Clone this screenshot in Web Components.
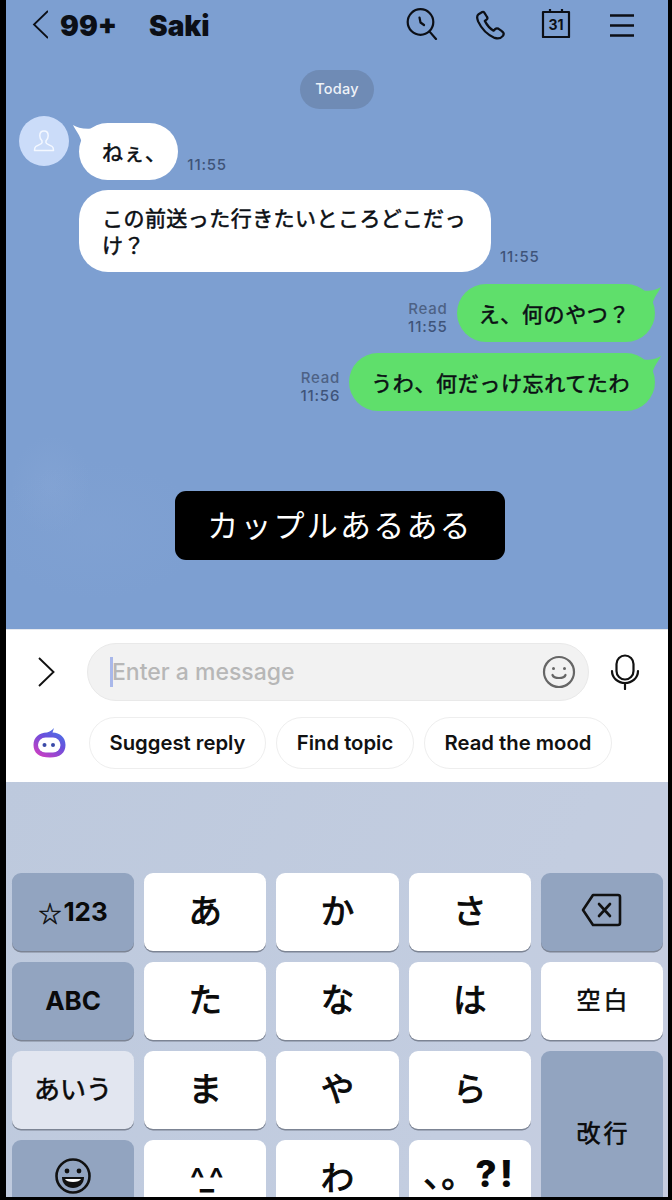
<!DOCTYPE html>
<html lang="ja">
<head>
<meta charset="utf-8">
<title>Saki</title>
<style>
    html, body { margin: 0; height: 1200px; background: #000; overflow: hidden; }
    body { font-family: Inter, "Noto Sans CJK JP", sans-serif; }
</style>
</head>
<body>
<phone-screen>
    <chat-view>
        <chat-header slot="top" count="99+" name="Saki"></chat-header>
        <date-pill>Today</date-pill>
        <chat-row side="in" avatar gap="7" time="11:55"><chat-bubble side="in" tail short>ねぇ、</chat-bubble></chat-row>
        <chat-row side="in" gap="10" time="11:55"><chat-bubble side="in" wide>この前送った行きたいところどこだっ<br>け？</chat-bubble></chat-row>
        <chat-row side="out" gap="12" time="11:55" read><chat-bubble side="out" tail>え、何のやつ？</chat-bubble></chat-row>
        <chat-row side="out" gap="11" time="11:56" read><chat-bubble side="out" tail>うわ、何だっけ忘れてたわ</chat-bubble></chat-row>
        <caption-box>カップルあるある</caption-box>
    </chat-view>
    <message-composer></message-composer>
    <kana-keyboard>
        <key-cap kind="fn" size="small" bold><span style="font:400 23px/1 'Noto Sans CJK JP',sans-serif;-webkit-text-stroke:.4px #0a0a0a;margin-right:2px">☆</span>123</key-cap>
        <key-cap>あ</key-cap><key-cap>か</key-cap><key-cap>さ</key-cap>
        <key-cap kind="fn">
            <svg width="42" height="36" viewBox="0 0 42 36" fill="none" stroke="#111" stroke-width="2.6" stroke-linejoin="round" stroke-linecap="round">
                <path d="M12 4H37a2 2 0 0 1 2 2V32a2 2 0 0 1-2 2H12L2 19Z"/>
                <path d="M18 13L29 25M29 13L18 25"/>
            </svg>
        </key-cap>
        <key-cap kind="fn" size="small" bold>ABC</key-cap>
        <key-cap>た</key-cap><key-cap>な</key-cap><key-cap>は</key-cap>
        <key-cap size="word">空白</key-cap>
        <key-cap kind="light" size="small">あいう</key-cap>
        <key-cap>ま</key-cap><key-cap>や</key-cap><key-cap>ら</key-cap>
        <key-cap kind="fn" size="word" tall cut>改行</key-cap>
        <key-cap kind="fn" cut>
            <svg width="38" height="38" viewBox="0 0 38 38">
                <circle cx="19" cy="19" r="16.5" fill="none" stroke="#111" stroke-width="2.6"/>
                <circle cx="13" cy="14" r="2.4" fill="#111"/><circle cx="25" cy="14" r="2.4" fill="#111"/>
                <path d="M8 20H30C30 27 25 31 19 31S8 27 8 20Z" fill="#111"/>
                <path d="M11 22H27C26 24 23 25 19 25S12 24 11 22Z" fill="#fff"/>
            </svg>
        </key-cap>
        <key-cap cut face>^_^</key-cap><key-cap cut>わ</key-cap>
        <key-cap cut><span style="font-size:34px;letter-spacing:-16px;text-spacing-trim:space-all;margin:-6px 16px 0 0">、。</span><span style="font:800 37px/1 Inter,sans-serif;letter-spacing:3px;margin-top:-6px;-webkit-text-stroke:0">?!</span></key-cap>
    </kana-keyboard>
</phone-screen>

<script>
class PhoneScreen extends HTMLElement {
    constructor() {
        super();
        this.attachShadow({ mode: 'open' }).innerHTML = `
<style>
    :host {
        display: flex;
        flex-direction: column;
        width: 662px;
        height: 1197px;
        margin-left: 6px;
        background: #fff;
    }
</style>
<slot></slot>`;
    }
}

class ChatView extends HTMLElement {
    constructor() {
        super();
        this.attachShadow({ mode: 'open' }).innerHTML = `
<style>
    :host {
        display: flex;
        flex-direction: column;
        flex: none;
        height: 629px;
        background:
            radial-gradient(ellipse 40px 50px at 45px 485px, rgba(146,174,218,.22), transparent),
            radial-gradient(ellipse 110px 70px at 90px 530px, rgba(140,170,216,.16), transparent),
            #7d9fd1;
    }
</style>
<slot name="top"></slot>
<slot></slot>`;
    }
}

class ChatHeader extends HTMLElement {
    constructor() {
        super();
        this.attachShadow({ mode: 'open' }).innerHTML = `
<style>
    :host {
        display: flex;
        align-items: center;
        height: 50px;
        padding: 2px 33px 0 26px;
        box-sizing: border-box;
        color: #0c0f16;
        font: 900 28px/1 Inter, sans-serif;
    }
    .back { margin-top: -2px; }
    .count { margin-left: 12px; width: 89px; }
    .name { flex: 1; }
    .icons { display: flex; align-items: center; margin-top: -2px; }
    svg { display: block; fill: none; stroke: #0c0f16; stroke-width: 2.2; stroke-linecap: round; stroke-linejoin: round; }
    .cal { position: relative; width: 30px; height: 30px; margin: -4px 38px 0 35px; }
    .cal span {
        position: absolute;
        left: 0;
        right: 0;
        top: 9px;
        text-align: center;
        font: 700 14px/16px Inter, sans-serif;
    }
</style>
<svg class="back" width="16" height="30" viewBox="0 0 16 30"><path d="M16 1L2 14.5L16 28" stroke-linecap="butt" stroke-linejoin="miter" stroke-width="1.8"/></svg>
<span class="count"></span>
<span class="name"></span>
<div class="icons">
    <svg width="32" height="32" viewBox="0 0 32 32" style="margin:-2px 37px 0 0">
        <circle cx="14.5" cy="14" r="12.8"/>
        <path d="M13.5 9.5L14.5 14.5L18 17M23.6 23.6L30 31"/>
    </svg>
    <svg width="31" height="32" viewBox="0 0 30 30">
        <path d="M7 2.5L3.5 4.5C1.5 6 2 9 3 11.5C6 18 11 24 19 27.5C22 28.5 25 28 27 25.5C28.5 23.5 27.5 22 26 21L22.5 18.5C21.5 18 20.5 18 19.5 19L18 20.5C14.5 18.5 11.5 15 9.5 11L11.5 9.5C12 9 12.2 8 11.5 7L9 3C8.5 2.3 7.7 2.2 7 2.5Z"/>
    </svg>
    <div class="cal">
        <svg width="30" height="30" viewBox="0 0 30 30"><path d="M2 4H28V29H2ZM9 4V1M21 4V1" stroke-linecap="butt"/></svg>
        <span>31</span>
    </div>
    <svg width="26" height="24" viewBox="0 0 26 24" style="stroke-width:2.5"><path d="M1 2.500H25M1 12.500H25M1 22.500H25" stroke-linecap="butt"/></svg>
</div>`;
        this.shadowRoot.querySelector('.count').textContent = this.getAttribute('count');
        this.shadowRoot.querySelector('.name').textContent = this.getAttribute('name');
    }
}

class DatePill extends HTMLElement {
    constructor() {
        super();
        this.attachShadow({ mode: 'open' }).innerHTML = `
<style>
    :host {
        display: flex;
        align-items: center;
        justify-content: center;
        align-self: center;
        width: 74px;
        height: 39px;
        margin: 20px 0 0 0;
        border-radius: 20px;
        background: #6f8bb5;
        color: #eef2f8;
        font: 500 14.500px/1 Inter, sans-serif;
        letter-spacing: .2px;
    }
</style>
<slot></slot>`;
    }
}

class ChatRow extends HTMLElement {
    constructor() {
        super();
        this.attachShadow({ mode: 'open' }).innerHTML = `
<style>
    :host {
        display: flex;
        align-items: flex-end;
        gap: 9px;
        padding: 0 13px 0 73px;
    }
    :host([avatar]) { padding-left: 13px; }
    :host([side="out"]) { flex-direction: row-reverse; }
    .avatar {
        flex: none;
        align-self: flex-start;
        align-items: center;
        justify-content: center;
        width: 50px;
        height: 50px;
        margin-right: 1px;
        border-radius: 50%;
        background: #cbdcf9;
    }
    .meta {
        display: flex;
        flex-direction: column;
        align-items: flex-end;
        padding-bottom: 6px;
        color: #3f5479;
        font: 500 15px/18px Inter, sans-serif;
        letter-spacing: .8px;
    }
    .read { color: #4d6285; }
</style>
<div class="avatar">
    <svg width="24" height="24" viewBox="0 0 24 24" fill="none" stroke="#f4f8ff" stroke-width="1.500" stroke-linejoin="round">
        <path d="M12 2C9.300 2 7.800 4.200 7.800 6.700C7.800 9 8.800 10.700 10 11.800V13.800C10 15 5.800 16 3.800 17.500C2.800 18.300 2.500 19.600 2.500 21.500H21.500C21.500 19.600 21.200 18.300 20.200 17.500C18.200 16 14 15 14 13.800V11.800C15.200 10.700 16.200 9 16.200 6.700C16.200 4.200 14.700 2 12 2Z"/>
    </svg>
</div>
<slot></slot>
<div class="meta"><span class="read" hidden>Read</span><span class="time"></span></div>`;
        this.shadowRoot.querySelector('.time').textContent = this.getAttribute('time');
        this.shadowRoot.querySelector('.avatar').style.display = this.hasAttribute('avatar') ? 'flex' : 'none';
        if (this.hasAttribute('read')) {
            this.shadowRoot.querySelector('.read').hidden = false;
        }
        this.style.marginTop = this.getAttribute('gap') + 'px';
    }
}

class ChatBubble extends HTMLElement {
    constructor() {
        super();
        this.attachShadow({ mode: 'open' }).innerHTML = `
<style>
    :host {
        position: relative;
        display: block;
        padding: 15px 25px 15px 23px;
        border-radius: 29px;
        color: #0b0f14;
        font: 400 21px/27px "Noto Sans CJK JP", sans-serif;
        -webkit-text-stroke: .55px #0b0f14;
        letter-spacing: .45px;
        white-space: nowrap;
    }
    :host([side="in"]) { background: #fff; }
    :host([side="out"]) { background: #5fdf6b; padding: 15.500px 25px 15.500px 22px; letter-spacing: .62px; }
    :host([tail][side="in"]) { margin-top: 7px; }
    :host([wide]) { padding-top: 14px; padding-bottom: 14px; }
    :host([short]) { padding-right: 12px; }
    svg { position: absolute; top: 0; display: none; }
    :host([tail]) svg { display: block; }
    :host([side="in"]) svg { left: -6px; top: 2px; }
    :host([side="out"]) svg { right: -6px; top: 3px; transform: scaleX(-1); }
    :host([side="in"]) path { fill: #fff; }
    :host([side="out"]) path { fill: #5fdf6b; }
</style>
<svg width="24" height="18" viewBox="0 0 24 18"><path d="M0 0C5 3 12 5 24 3V18H9C7 10 3 6 0 0Z"/></svg>
<slot></slot>`;
    }
}

class CaptionBox extends HTMLElement {
    constructor() {
        super();
        this.attachShadow({ mode: 'open' }).innerHTML = `
<style>
    :host {
        display: flex;
        align-items: center;
        justify-content: center;
        align-self: flex-start;
        box-sizing: border-box;
        width: 330px;
        height: 69px;
        margin: 80px 0 0 169px;
        padding-bottom: 4px;
        border-radius: 11px;
        background: #000;
        color: #fff;
        font: 400 31px/1 "Noto Sans CJK JP", sans-serif;
        letter-spacing: 2.200px;
    }
</style>
<slot></slot>`;
    }
}

class MessageComposer extends HTMLElement {
    constructor() {
        super();
        this.attachShadow({ mode: 'open' }).innerHTML = `
<style>
    :host {
        display: block;
        flex: none;
        box-sizing: border-box;
        height: 153px;
        padding-top: 13px;
        background: #fff;
        border-top: 1px solid #e6e9ef;
    }
    .line { display: flex; align-items: center; height: 58px; padding-left: 32px; }
    .arrow { flex: none; margin-right: 32px; }
    .field {
        flex: none;
        box-sizing: border-box;
        display: flex;
        align-items: center;
        width: 502px;
        height: 58px;
        padding: 0 12px 0 22px;
        border: 1px solid #e9e9e9;
        border-radius: 29px;
        background: #f2f2f2;
    }
    .caret { flex: none; width: 3px; height: 30px; margin-right: -1px; background: #a9b8ea; }
    .hint { flex: 1; color: #b7b7b7; font: 500 23px/1 Inter, sans-serif; }
    .mic { flex: none; margin-left: 21px; }
    .chips { display: flex; align-items: center; height: 52px; margin-top: 16px; padding-left: 27px; }
    .logo { flex: none; margin-right: 23px; }
    .chip {
        flex: none;
        box-sizing: border-box;
        display: flex;
        align-items: center;
        justify-content: center;
        height: 52px;
        margin-right: 10px;
        border: 1px solid #eeeeee;
        border-radius: 26px;
        color: #111;
        font: 600 20.300px/1 Inter, sans-serif;
    }
</style>
<div class="line">
    <svg class="arrow" width="17" height="30" viewBox="0 0 17 30" fill="none" stroke="#111" stroke-width="1.900"><path d="M1 1L15.500 15L1 29"/></svg>
    <div class="field">
        <span class="caret"></span>
        <span class="hint">Enter a message</span>
        <svg width="34" height="34" viewBox="0 0 34 34" fill="none" stroke="#666" stroke-width="2.200">
            <circle cx="17" cy="17" r="15"/>
            <circle cx="11.500" cy="13.500" r="1.500" fill="#666" stroke="none"/>
            <circle cx="22.500" cy="13.500" r="1.500" fill="#666" stroke="none"/>
            <path d="M10.500 20C12 24 22 24 23.500 20" stroke-linecap="round"/>
        </svg>
    </div>
    <svg class="mic" width="30" height="36" viewBox="0 0 30 36" fill="none" stroke="#111" stroke-width="2.200" stroke-linecap="round">
        <rect x="6.500" y="1.500" width="17" height="24" rx="8.500"/>
        <path d="M2 17C2 24 8 29 15 29S28 24 28 17M15 29V35"/>
    </svg>
</div>
<div class="chips">
    <svg class="logo" width="33" height="30" viewBox="0 0 33 30">
        <defs><linearGradient id="ai" x1="1" y1="0" x2=".3" y2="1">
            <stop offset="0" stop-color="#3f80ea"/><stop offset=".5" stop-color="#6a4fdc"/><stop offset="1" stop-color="#c63fc4"/>
        </linearGradient></defs>
        <path d="M21 0L19.500 4.500C27 5 32.500 9 32.500 17C32.500 25 27 29.500 17 29.500C6 29.500 .5 25 .5 17C.5 9 6 5 14 4.500C17 3.500 19 2 21 0Z" fill="url(#ai)"/>
        <rect x="5" y="9.500" width="22.500" height="15" rx="7.500" fill="#fff"/>
        <circle cx="11.500" cy="17" r="2" fill="#3a4aa8"/><circle cx="20" cy="17" r="2" fill="#3a4aa8"/>
    </svg>
    <span class="chip" style="width:177px">Suggest reply</span>
    <span class="chip" style="width:138px">Find topic</span>
    <span class="chip" style="width:188px">Read the mood</span>
</div>`;
    }
}

class KanaKeyboard extends HTMLElement {
    constructor() {
        super();
        this.attachShadow({ mode: 'open' }).innerHTML = `
<style>
    :host {
        display: grid;
        flex: 1;
        min-height: 0;
        grid-template-columns: repeat(5, 1fr);
        grid-template-rows: 78px 78px 78px 57px;
        gap: 11px 10px;
        box-sizing: border-box;
        padding: 91px 5px 0 6px;
        background: linear-gradient(115deg, #bdc9dd, #c3cde0 70%, #c7cde0);
    }
</style>
<slot></slot>`;
    }
}

class KeyCap extends HTMLElement {
    constructor() {
        super();
        this.attachShadow({ mode: 'open' }).innerHTML = `
<style>
    :host {
        display: flex;
        align-items: center;
        justify-content: center;
        box-sizing: border-box;
        padding-bottom: 6px;
        border-radius: 9px;
        background: #fff;
        box-shadow: 0 1.500px 0 #7c8494;
        color: #0a0a0a;
        font: 400 33.500px/1 "Noto Sans CJK JP", sans-serif;
        -webkit-text-stroke: 1px #0a0a0a;
    }
    :host([kind="fn"]) { background: #92a4c0; }
    :host([kind="light"]) { background: #e2e6f0; }
    :host([size="small"]) { padding-bottom: 4px; font-size: 26px; -webkit-text-stroke: .6px #0a0a0a; }
    :host([size="small"][bold]) { padding-bottom: 0; font: 700 26px/1 Inter, "Noto Sans CJK JP", sans-serif; -webkit-text-stroke: 0; }
    :host([size="word"]) { padding-bottom: 4px; font-size: 24px; -webkit-text-stroke: .6px #0a0a0a; letter-spacing: 3px; text-indent: 3px; }
    :host([tall]) { grid-row: span 2; padding: 18px 0 0; }
    :host([cut]) { padding: 15px 0 0; border-radius: 9px 9px 0 0; box-shadow: none; }
    :host([face]) { padding-top: 18px; font: 700 30px/1 Inter, sans-serif; letter-spacing: -3px; -webkit-text-stroke: 0; }
</style>
<slot></slot>`;
    }
}

customElements.define('phone-screen', PhoneScreen);
customElements.define('chat-view', ChatView);
customElements.define('chat-header', ChatHeader);
customElements.define('date-pill', DatePill);
customElements.define('chat-row', ChatRow);
customElements.define('chat-bubble', ChatBubble);
customElements.define('caption-box', CaptionBox);
customElements.define('message-composer', MessageComposer);
customElements.define('kana-keyboard', KanaKeyboard);
customElements.define('key-cap', KeyCap);
</script>
</body>
</html>
